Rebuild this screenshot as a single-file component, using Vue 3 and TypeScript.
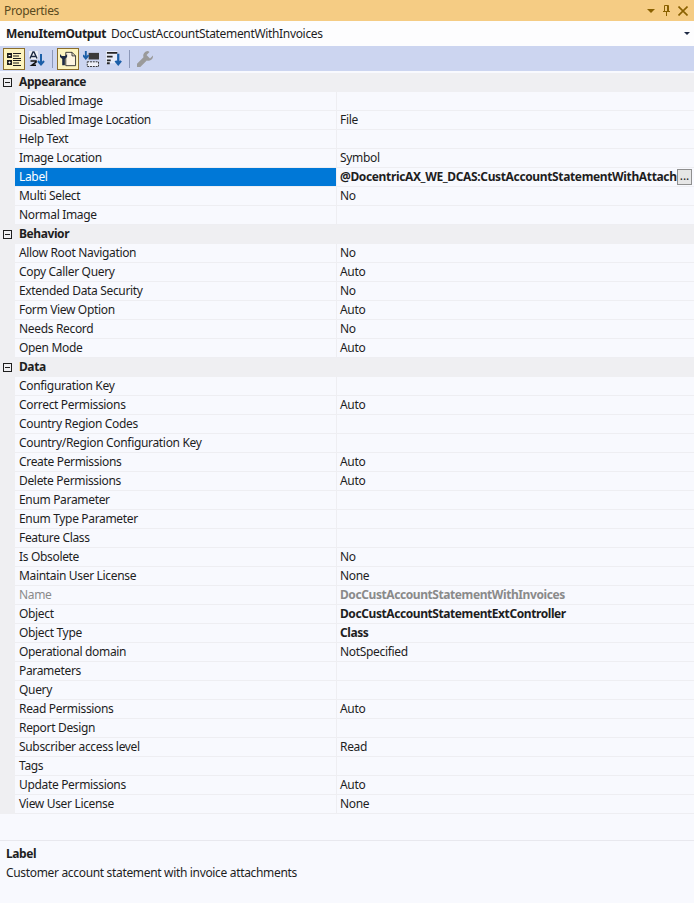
<script setup lang="ts">
interface Row { n: string; v?: string; cls?: string; sel?: boolean }
interface Group { title: string; rows: Row[] }
const groups: Group[] = [
  { title: 'Appearance', rows: [
    { n: 'Disabled Image' }, { n: 'Disabled Image Location', v: 'File' }, { n: 'Help Text' },
    { n: 'Image Location', v: 'Symbol' },
    { n: 'Label', v: '@DocentricAX_WE_DCAS:CustAccountStatementWithAttach', cls: 'bold', sel: true },
    { n: 'Multi Select', v: 'No' }, { n: 'Normal Image' } ] },
  { title: 'Behavior', rows: [
    { n: 'Allow Root Navigation', v: 'No' }, { n: 'Copy Caller Query', v: 'Auto' },
    { n: 'Extended Data Security', v: 'No' }, { n: 'Form View Option', v: 'Auto' },
    { n: 'Needs Record', v: 'No' }, { n: 'Open Mode', v: 'Auto' } ] },
  { title: 'Data', rows: [
    { n: 'Configuration Key' }, { n: 'Correct Permissions', v: 'Auto' }, { n: 'Country Region Codes' },
    { n: 'Country/Region Configuration Key' }, { n: 'Create Permissions', v: 'Auto' },
    { n: 'Delete Permissions', v: 'Auto' }, { n: 'Enum Parameter' }, { n: 'Enum Type Parameter' },
    { n: 'Feature Class' }, { n: 'Is Obsolete', v: 'No' }, { n: 'Maintain User License', v: 'None' },
    { n: 'Name', v: 'DocCustAccountStatementWithInvoices', cls: 'ro' },
    { n: 'Object', v: 'DocCustAccountStatementExtController', cls: 'bold' },
    { n: 'Object Type', v: 'Class', cls: 'bold' }, { n: 'Operational domain', v: 'NotSpecified' },
    { n: 'Parameters' }, { n: 'Query' }, { n: 'Read Permissions', v: 'Auto' }, { n: 'Report Design' },
    { n: 'Subscriber access level', v: 'Read' }, { n: 'Tags' }, { n: 'Update Permissions', v: 'Auto' },
    { n: 'View User License', v: 'None' } ] },
];
</script>

<template>
  <div class="panel">
    <header class="title">
      <span>Properties</span>
      <div class="title-icons">
        <span class="tri"></span>
        <svg width="7" height="11" viewBox="0 0 7 11"><path d="M1.500.5h4v6h-4zM0 6.500h7M3.500 7v4M4.500 1v5" fill="none" stroke="#8a6100"/></svg>
        <svg width="10" height="10" viewBox="0 0 10 10"><path d="M.5.500l9 9M9.500.500l-9 9" stroke="#8a6100" stroke-width="1.600"/></svg>
      </div>
    </header>
    <div class="object">
      <b>MenuItemOutput</b><span class="obj-name">DocCustAccountStatementWithInvoices</span>
      <span class="tri dark"></span>
    </div>
    <div class="toolbar">
      <button class="tool on">
        <svg width="16" height="16" viewBox="0 0 16 16"><path d="M1 2h5v5H1zM1 9h5v5H1z" fill="#1e1e1e"/><path d="M2.500 4.500h2M2.500 11.500h2M3.500 10.500v2" stroke="#fff"/><path d="M7 2.500h8M7 5h6M7 7.500h8M7 9.500h8M7 12h6M7 14.500h8" stroke="#1e1e1e"/></svg>
      </button>
      <button class="tool">
        <svg width="16" height="16" viewBox="0 0 16 16"><path d="M0 0h9v8H0z" fill="#eef0f8"/><path d="M1 7.500L4 1h1l3 6.500M2.500 5.500h4" fill="none" stroke="#1e2a44" stroke-width="1.400"/><path d="M1.500 10h5.500v1.200l-4 3h4" fill="none" stroke="#111" stroke-width="1.600"/><path d="M12 3v10M9 10l3 3.500 3-3.500" fill="none" stroke="#1c5fa8" stroke-width="2"/></svg>
      </button>
      <i class="sep"></i>
      <button class="tool on">
        <svg width="18" height="16" viewBox="0 0 20 18"><path d="M7.500 1.500h7l4 4v11h-11z" fill="#fdf4e0" stroke="#2a2a2a"/><path d="M14.500 1.500V5.500h4" fill="none" stroke="#2a2a2a"/><path d="M1 3.500v3.200L3.500 9V16h3V9L9 6.700V3.500L7 5.500H3z" fill="#1e2a44"/></svg>
      </button>
      <button class="tool">
        <svg width="16" height="16" viewBox="0 0 17 17"><path d="M6 2h11v7H6z" fill="#3a3a3a"/><path d="M4.500 11.500h12v5h-12z" fill="#eef0f8" stroke="#262626" stroke-dasharray="2 1"/><path d="M3 0v7M0 4.500L3 8l3-3.500" fill="none" stroke="#1c5fa8" stroke-width="2"/></svg>
      </button>
      <button class="tool">
        <svg width="16" height="16" viewBox="0 0 17 17"><path d="M0 0h12v13H0z" fill="#f4f6fc" opacity=".7"/><path d="M1 1h11v2H1zM1 5h6v2H1zM1 9h4v2H1zM1 12h3v2H1z" fill="#262626"/><path d="M13 3v11M10 10.500l3 3.500 3-3.500" fill="none" stroke="#1c5fa8" stroke-width="2.400"/></svg>
      </button>
      <i class="sep"></i>
      <button class="tool">
        <svg width="16" height="16" viewBox="0 0 16 16"><path d="M11 0a4.700 4.700 0 0 0-4.500 6.200L0 12.700V16h3.300l6.500-6.500A4.700 4.700 0 0 0 16 4.600l-3 3-3.500-3.500L12.500 1z" fill="#9a9a9a"/></svg>
      </button>
    </div>

    <div class="grid">
      <section v-for="g in groups" :key="g.title">
        <div class="group">
          <span class="box"></span><b>{{ g.title }}</b>
        </div>
        <div v-for="r in g.rows" :key="r.n" class="row" :class="{ sel: r.sel, ro: r.cls === 'ro' }">
          <div class="name">{{ r.n }}</div>
          <div class="val" :class="r.cls">{{ r.v }}</div>
          <span v-if="r.sel" class="more">...</span>
        </div>
      </section>
    </div>

    <div class="spacer"></div>
    <div class="desc">
      <b>Label</b>
      <div>Customer account statement with invoice attachments</div>
    </div>
  </div>
</template>

<style>
html, body { margin: 0; background: #f8f9fe; }
</style>

<style scoped>
.panel {
  width: 694px;
  height: 903px;
  overflow: hidden;
  background: #f8f9fe;
  color: #1e1e1e;
  font: 12px/17px "Noto Sans", sans-serif;
  letter-spacing: -0.33px;
}
b, .bold { font-weight: 700; letter-spacing: -0.42px; }
.title {
  height: 21px;
  background: #f5cc84;
  color: #5a4a20;
  display: flex;
  align-items: center;
  justify-content: space-between;
  padding: 0 4px;
}
.title-icons { display: flex; align-items: center; gap: 8px; padding-right: 2px; }
.tri { width: 0; height: 0; border: 4px solid transparent; border-top-color: #8a6100; border-bottom: 0; }
.tri.dark { border-top-color: #1e2a44; margin-left: auto; margin-right: 1px; border-width: 3px 3px 0; }
.object {
  height: 25px;
  background: #fdfdfe;
  display: flex;
  align-items: center;
  padding: 0 3px 0 6px;
}
.obj-name { margin-left: 5px; }
.toolbar {
  height: 25px;
  background: #ccd5f0;
  display: flex;
  align-items: center;
  padding-left: 3px;
  gap: 1px;
}
.tool {
  width: 22px;
  height: 22px;
  padding: 0;
  border: 1px solid transparent;
  background: none;
  display: flex;
  align-items: center;
  justify-content: center;
}
.tool.on { background: #fdf4bf; border-color: #8a6d2c; }
.sep { width: 1px; height: 18px; background: #8c98b8; margin: 0 3px; }
.grid { margin-top: 2px; }
.group {
  height: 19px;
  background: #efeff2;
  display: flex;
  align-items: flex-start;
}
.group b { margin-left: 7px; }
.box {
  box-sizing: border-box;
  width: 9px;
  height: 9px;
  margin: 5px 0 0 3px;
  border: 1px solid #1e1e1e;
  background: linear-gradient(#1e1e1e, #1e1e1e) center / 5px 1px no-repeat;
}
.row {
  height: 19px;
  box-sizing: border-box;
  margin-left: 15px;
  display: flex;
  position: relative;
  border-bottom: 1px solid #eeeef2;
  box-shadow: -15px 0 0 #efeff2;
}
.name { width: 322px; padding-left: 4px; box-sizing: border-box; border-right: 1px solid #eeeef2; white-space: nowrap; }
.val { flex: 1; min-width: 0; padding-left: 3px; white-space: nowrap; overflow: hidden; }
.ro .name, .val.ro { color: #8a8a8a; }
.val.ro { font-weight: 700; letter-spacing: -0.42px; }
.sel .name { background: #0078d7; color: #fff; }
.sel .val { margin-right: 16px; letter-spacing: -0.36px; }
.more {
  position: absolute;
  right: 2px;
  top: 1px;
  box-sizing: border-box;
  width: 15px;
  height: 16px;
  background: #e6e6e6;
  border: 1px solid #8f8f8f;
  font-size: 12px;
  line-height: 12px;
  letter-spacing: 0;
  text-align: center;
}
.spacer { height: 26px; border-bottom: 1px solid #e8e8ee; }
.desc { padding: 3px 6px; line-height: 19px; }
</style>
